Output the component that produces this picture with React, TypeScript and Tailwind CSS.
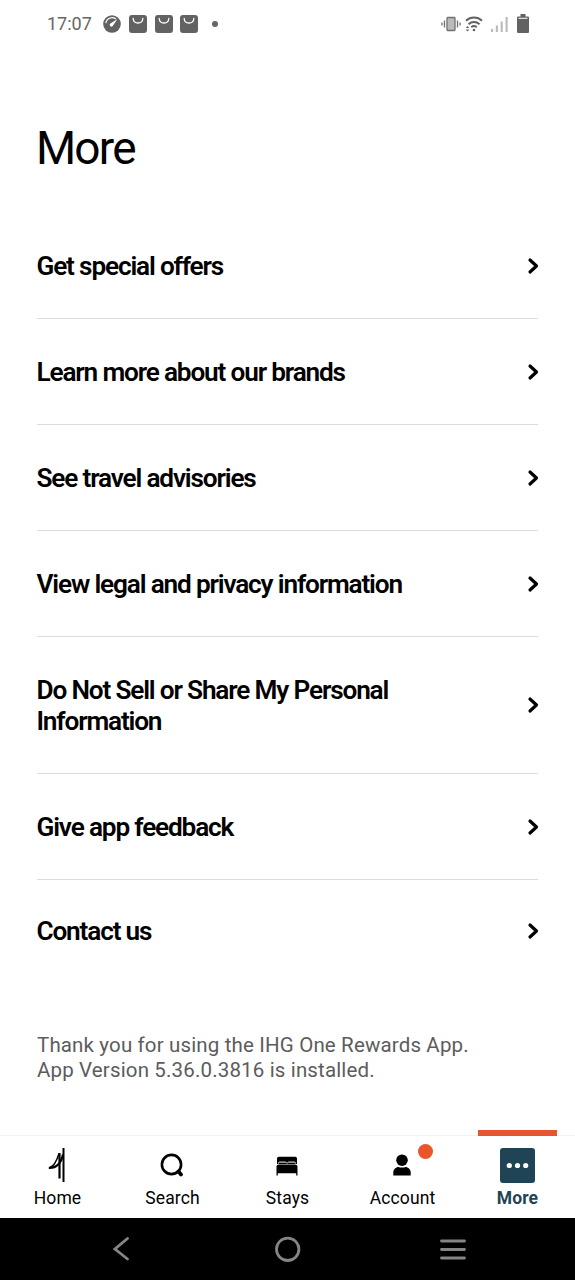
import React from "react";

interface MenuItem {
    id: string;
    label: string;
}

interface Tab {
    id: string;
    label: string;
    icon: React.ReactNode;
    badge?: boolean;
}

const MENU_ITEMS: MenuItem[] = [
    { id: "offers", label: "Get special offers" },
    { id: "brands", label: "Learn more about our brands" },
    { id: "advisories", label: "See travel advisories" },
    { id: "legal", label: "View legal and privacy information" },
    { id: "privacy", label: "Do Not Sell or Share My Personal Information" },
    { id: "feedback", label: "Give app feedback" },
    { id: "contact", label: "Contact us" },
];

function HomeIcon() {
    return (
        <svg width="18" height="36" viewBox="0 0 18 36" fill="none" stroke="#000">
            <path d="M15.500 1v34" strokeWidth="2" />
            <path d="M11.500 6v25.500" strokeWidth="2.200" />
            <path d="M2 20.500C6.500 19 9 13 11 6.500" strokeWidth="1.500" />
            <path d="M.8 20.900C8 21.200 13 16.500 15 7.500" strokeWidth="2.200" />
        </svg>
    );
}

function SearchIcon() {
    return (
        <svg width="24" height="24" viewBox="0 0 24 24" fill="none" stroke="#000" strokeWidth="2.600" strokeLinecap="round">
            <circle cx="11.500" cy="11.500" r="9.600" />
            <path d="M18.500 18.500l2.500 2.900" strokeWidth="3.800" />
        </svg>
    );
}

function BedIcon() {
    return (
        <svg className="mt-px" width="22" height="20" viewBox="0 0 22 20">
            <path d="M1 8V2.500A1.800 1.800 0 0 1 2.800.7h16.400A1.800 1.800 0 0 1 21 2.500V8z" />
            <path d="M.5 19.500V11.200A2.500 2.500 0 0 1 3 8.500h16a2.500 2.500 0 0 1 2.500 2.700v8.300h-1.300V17.300H1.800v2.200z" />
            <path d="M2.500 7.500c0-1.300.5-1.400 1.500-1.400h5c1 0 1.500.3 1.500 1.200M11.500 7.300c0-.9.5-1.200 1.500-1.200h5c1 0 1.500.1 1.500 1.400" fill="none" stroke="#fff" strokeWidth="1" />
        </svg>
    );
}

function AccountIcon() {
    return (
        <svg width="18" height="22" viewBox="0 0 18 22">
            <circle cx="9" cy="6.200" r="5.800" />
            <path d="M.3 21.500v-3.200C.3 15.500 3 13 5.500 13c1.200.8 5.800.8 7 0 2.500 0 5.200 2.500 5.200 5.300v3.200z" />
        </svg>
    );
}

function MoreIcon() {
    return (
        <div className="flex size-[35px] items-center justify-center rounded-[3px] bg-[#1f4456]">
            <svg width="23" height="7" viewBox="0 0 23 7" fill="#fff">
                <circle cx="3.300" cy="3.500" r="2.600" />
                <circle cx="11.500" cy="3.500" r="2.600" />
                <circle cx="19.700" cy="3.500" r="2.600" />
            </svg>
        </div>
    );
}

const TABS: Tab[] = [
    { id: "home", label: "Home", icon: <HomeIcon /> },
    { id: "search", label: "Search", icon: <SearchIcon /> },
    { id: "stays", label: "Stays", icon: <BedIcon /> },
    { id: "account", label: "Account", icon: <AccountIcon />, badge: true },
    { id: "more", label: "More", icon: <MoreIcon /> },
];

function BagIcon() {
    return (
        <svg width="18" height="18" viewBox="0 0 18 18">
            <rect width="18" height="18" rx="3" fill="#626262" />
            <path d="M4.200 3.500c.3 6 9.300 6 9.600 0" fill="none" stroke="#fff" strokeWidth="1.300" strokeLinecap="round" />
        </svg>
    );
}

function StatusBar() {
    return (
        <header className="flex h-[47px] items-center justify-between pr-[46px] pl-[47px] text-[#666]">
            <div className="flex items-center">
                <span className="w-[56px] pt-px text-[18px] leading-none">17:07</span>
                <svg width="18" height="18" viewBox="0 0 18 18">
                    <circle cx="9" cy="9" r="8.800" fill="#626262" />
                    <path d="M2.800 8.200C4 2.500 9.500 1.500 13 4" fill="none" stroke="#fff" strokeWidth="1.200" />
                    <path d="M14.300 4.300L9.500 11.300A1.800 1.800 0 0 1 7 8.800z" fill="#fff" />
                </svg>
                <div className="ml-[8px] flex gap-[7.700px]">
                    <BagIcon />
                    <BagIcon />
                    <BagIcon />
                </div>
                <span className="ml-[14px] size-[6px] rounded-full bg-[#666]" />
            </div>
            <div className="flex items-center">
                {/* vibrate */}
                <svg width="20" height="16" viewBox="0 0 20 16" fill="none" stroke="#707070" strokeWidth="1.300">
                    <rect x="6" y="1.500" width="8" height="13" rx=".8" fill="#bbb" />
                    <path d="M3.500 4.500v7M1 6.500v3M16.500 4.500v7M19 6.500v3" />
                </svg>
                <svg className="ml-[4px]" width="18" height="16" viewBox="0 0 18 16" fill="none" stroke="#626262" strokeWidth="1.900">
                    <path d="M1 4.700C5.500.4 12.500.4 17 4.700M3.500 8.200c3.200-2.900 7.800-2.900 11 0M6.300 11.200c1.700-1.500 3.700-1.500 5.400 0" />
                    <circle cx="9" cy="14" r="1.300" fill="#626262" stroke="none" />
                    <path d="M2.500 10l1.800 2H.7zM2.500 15.500l1.800-2H.7z" fill="#626262" stroke="none" />
                </svg>
                <svg className="ml-[8px]" width="17" height="16" viewBox="0 0 17 16" fill="#bdbdbd">
                    <path d="M0 13h2.200v3H0zM4.800 9.500H7V16H4.800zM9.600 5.500h2.200V16H9.600zM14.500 1h2.200v15h-2.200z" />
                </svg>
                <svg className="ml-[9px]" width="12" height="19" viewBox="0 0 12 19" fill="#626262">
                    <path d="M3.500 0h5v2.500H11a1 1 0 0 1 1 1V18a1 1 0 0 1-1 1H1a1 1 0 0 1-1-1V3.500a1 1 0 0 1 1-1h2.500z" />
                    <path d="M1.500 4.300h9" stroke="#fff" strokeWidth="1" />
                </svg>
            </div>
        </header>
    );
}

function MenuRow({ item }: { item: MenuItem }) {
    return (
        <li className="flex items-center justify-between border-b border-[#dcdcdc] pt-[37px] pb-[37px] last:border-b-0 last:pt-[35px]">
            <span className="-mb-px -ml-[0.500px] w-[400px] pt-px text-[26.200px] leading-[31px] font-semibold tracking-[-1.160px]">{item.label}</span>
            <svg className="-mr-px" width="12" height="18" viewBox="0 0 12 18" fill="none" stroke="#000" strokeWidth="3.200" strokeLinecap="round" strokeLinejoin="round">
                <path d="M3 3l6.500 6L3 15" />
            </svg>
        </li>
    );
}

function TabBar({ activeTab }: { activeTab: string }) {
    return (
        <nav className="flex h-[83px] border-t border-[#f2f2f2]">
            {TABS.map((tab) => (
                <button
                    key={tab.id}
                    className={`relative flex flex-1 flex-col items-center ${activeTab === tab.id ? "font-bold text-[#1f4456]" : "text-black"
                        }`}
                >
                    {activeTab === tab.id && <span className="absolute -top-[6px] h-[6px] w-[79px] bg-[#e6552f]" />}
                    <span className="mt-[11px] mr-px flex h-[36px] items-center justify-center">{tab.icon}</span>
                    <span className="mt-[4px] text-[17.500px] leading-[22px] tracking-[0.100px]">{tab.label}</span>
                    {tab.badge && <span className="absolute top-[8px] left-[73px] size-[15px] rounded-full bg-[#ea552b]" />}
                </button>
            ))}
        </nav>
    );
}

function SystemNav() {
    return (
        <footer className="flex h-[62px] items-center justify-between bg-black pr-[109px] pl-[113px]">
            <svg width="17" height="24" viewBox="0 0 17 24" fill="none" stroke="#858585" strokeWidth="2.800" strokeLinecap="round">
                <path d="M14.500 1.500L2 12l12.500 10" />
            </svg>
            <svg className="ml-[5px]" width="26" height="26" viewBox="0 0 26 26" fill="none" stroke="#858585" strokeWidth="2.800">
                <circle cx="12.700" cy="13.300" r="11.200" />
            </svg>
            <svg width="26" height="22" viewBox="0 0 26 22" fill="none" stroke="#858585" strokeWidth="2.800" strokeLinecap="round">
                <path d="M1.500 3h23M1.500 11.500h23M1.500 20h23" />
            </svg>
        </footer>
    );
}

export default function App() {
    return (
        <div className="flex h-[1280px] w-[575px] flex-col bg-white font-[Roboto,sans-serif] text-black">
            <StatusBar />
            <main className="flex-1 px-[37px]">
                <h1 className="mt-[73px] -ml-px text-[46px] leading-[56px] tracking-[-1.800px]">More</h1>
                <ul className="mt-[37px]">
                    {MENU_ITEMS.map((item) => (
                        <MenuRow key={item.id} item={item} />
                    ))}
                </ul>
                <p className="mt-[50px] text-[20.500px] leading-[24.500px] tracking-[0.150px] text-[#5c5c5c]">
                    Thank you for using the IHG One Rewards App.
                    <br />
                    App Version 5.36.0.3816 is installed.
                </p>
            </main>
            <TabBar activeTab="more" />
            <SystemNav />
        </div>
    );
}
